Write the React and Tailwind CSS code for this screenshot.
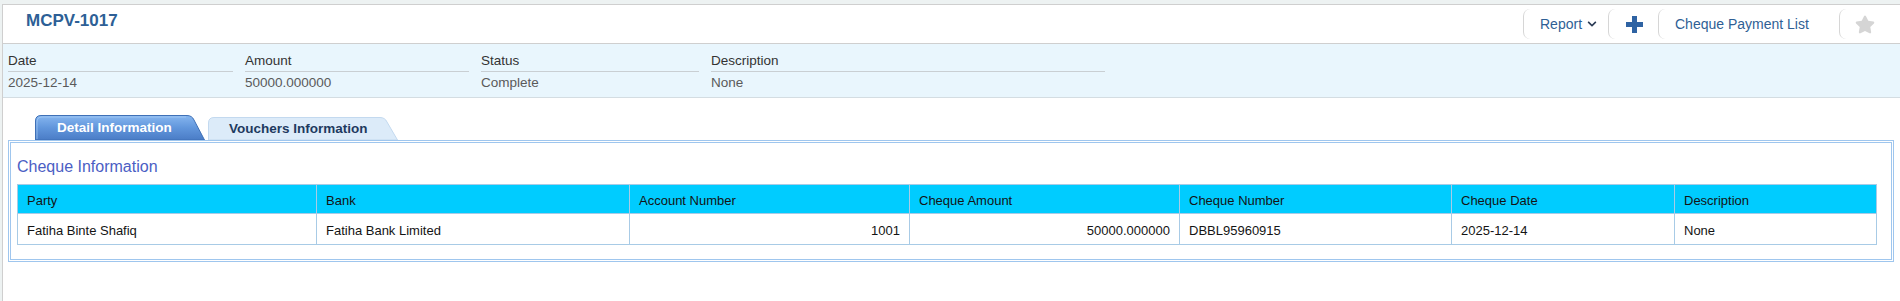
import React from 'react';
import { FaStar, FaChevronDown } from 'react-icons/fa';

const infoFields = [
  { label: 'Date', value: '2025-12-14', width: 'w-[225px]' },
  { label: 'Amount', value: '50000.000000', width: 'w-[224px]' },
  { label: 'Status', value: 'Complete', width: 'w-[218px]' },
  { label: 'Description', value: 'None', width: 'w-[394px]' },
];

const columns = [
  { title: 'Party', width: 'w-[298px]', first: true },
  { title: 'Bank', width: 'w-[313px]' },
  { title: 'Account Number', width: 'w-[280px]', right: true },
  { title: 'Cheque Amount', width: 'w-[270px]', right: true },
  { title: 'Cheque Number', width: 'w-[272px]' },
  { title: 'Cheque Date', width: 'w-[223px]' },
  { title: 'Description', width: 'w-[202px]' },
];

const rows = [
  ['Fatiha Binte Shafiq', 'Fatiha Bank Limited', '1001', '50000.000000', 'DBBL95960915', '2025-12-14', 'None'],
];

const PlusIcon = () => (
  <svg width="17" height="17" viewBox="0 0 17 17">
    <rect x="6" y="0" width="5" height="17" fill="#2f63a3" />
    <rect x="0" y="6" width="17" height="5" fill="#2f63a3" />
  </svg>
);

const HeaderButton = ({ width, children, className = '' }) => (
  <div
    className={`${width} h-[30px] flex items-center pl-4 border-l border-[#d6d6d6] rounded-l-[7px] ${className}`}
  >
    {children}
  </div>
);

const Tab = ({ active, children }) => {
  if (active) {
    return (
      <div className="relative w-[170px] h-[25px] flex items-center pl-[22px]">
        <svg className="absolute inset-0" width="170" height="25" viewBox="0 0 170 25">
          <defs>
            <linearGradient id="activeTab" x1="0" y1="0" x2="0" y2="1">
              <stop offset="0" stopColor="#86b6ef" />
              <stop offset="0.5" stopColor="#6196dc" />
              <stop offset="1" stopColor="#4a7cc6" />
            </linearGradient>
          </defs>
          <path
            d="M0.5 25 L0.5 6 Q0.5 0.5 6 0.5 L152 0.5 Q157 0.5 159 5 L169.5 25 Z"
            fill="url(#activeTab)"
            stroke="#3f70b6"
          />
          <path d="M2 24 L2 7 Q2 2 7 2 L151 2" fill="none" stroke="#a9cdf5" strokeOpacity="0.7" />
        </svg>
        <span className="relative text-white font-bold text-[13.5px] leading-none">{children}</span>
      </div>
    );
  }
  return (
    <div className="relative w-[190px] h-[23px] flex items-center pl-[21px]">
      <svg className="absolute inset-0" width="190" height="23" viewBox="0 0 190 23">
        <path
          d="M0.5 23 L0.5 6 Q0.5 0.5 6 0.5 L172 0.5 Q177 0.5 179 5 L189.5 23 Z"
          fill="#dcebf9"
          stroke="#c3d9ef"
        />
      </svg>
      <span className="relative text-[#1e3a60] font-bold text-[13.5px] leading-none">{children}</span>
    </div>
  );
};

const App = () => {
  return (
    <div className="min-h-[301px] bg-[#edf2f2] pt-[4px] pl-[2px] font-['Liberation_Sans',Arial,sans-serif]">
      <div className="min-h-[297px] bg-white border-l border-t border-[#cfcfcf]">
        {/* header */}
        <div className="h-[39px] flex items-start justify-between border-b border-[#cfcfcf]">
          <h1 className="pl-[23px] pt-[4px] text-[17px] leading-[24px] font-bold text-[#2d5f96]">MCPV-1017</h1>
          <div className="h-full flex items-center">
            <HeaderButton width="w-[85px]">
              <span className="text-[14px] text-[#2f5f95]">Report</span>
              <FaChevronDown className="ml-[5px] w-[10px] h-[10px] text-[#2b3b55]" />
            </HeaderButton>
            <HeaderButton width="w-[50px]" className="pl-[17px]">
              <PlusIcon />
            </HeaderButton>
            <HeaderButton width="w-[181px]">
              <span className="text-[14px] text-[#2f5f95]">Cheque Payment List</span>
            </HeaderButton>
            <HeaderButton width="w-[61px]" className="pl-[15px]">
              <FaStar className="w-[20px] h-[19px] text-[#d5d5d5]" />
            </HeaderButton>
          </div>
        </div>

        {/* summary strip */}
        <div className="bg-[#e9f6fd] border-b border-[#d4dde2] pt-[6px] pb-[4px] pl-[5px] flex gap-[12px]">
          {infoFields.map(field => (
            <div key={field.label} className={field.width}>
              <div className="text-[13.5px] leading-[21px] text-[#333] border-b border-[#c9cfd3]">{field.label}</div>
              <div className="pt-[1px] text-[13.5px] leading-[20px] text-[#5a5a5a]">{field.value}</div>
            </div>
          ))}
        </div>

        {/* tabs + panel */}
        <div className="pt-[17px]">
          <div className="ml-[32px] flex items-end gap-[3px]">
            <Tab active>Detail Information</Tab>
            <Tab>Vouchers Information</Tab>
          </div>
          <div className="ml-[5px] mr-[6px] border-[3px] border-double border-[#9fc6ee] pl-[6px] pt-[13px] pb-[14px]">
            <h2 className="text-[16px] leading-[22px] text-[#4b5ec4] mb-[6px]">Cheque Information</h2>
            <div className="w-fit border border-[#a8cbe6] text-[13px] text-[#141414]">
              <div className="flex h-[29px] bg-[#00ccff] border-b border-[#a8cbe6]">
                {columns.map(col => (
                  <div
                    key={col.title}
                    className={`${col.width} ${col.first ? '' : 'border-l border-[#a8cbe6]'} flex items-center pt-[3px] pl-[9px]`}
                  >
                    {col.title}
                  </div>
                ))}
              </div>
              {rows.map((row, i) => (
                <div key={i} className="flex h-[30px] bg-white">
                  {row.map((cell, j) => (
                    <div
                      key={j}
                      className={`${columns[j].width} ${columns[j].first ? '' : 'border-l border-[#a8cbe6]'} flex items-center pt-[3px] ${columns[j].right ? 'justify-end pr-[9px]' : 'pl-[9px]'}`}
                    >
                      {cell}
                    </div>
                  ))}
                </div>
              ))}
            </div>
          </div>
        </div>
      </div>
    </div>
  );
};

export default App;
